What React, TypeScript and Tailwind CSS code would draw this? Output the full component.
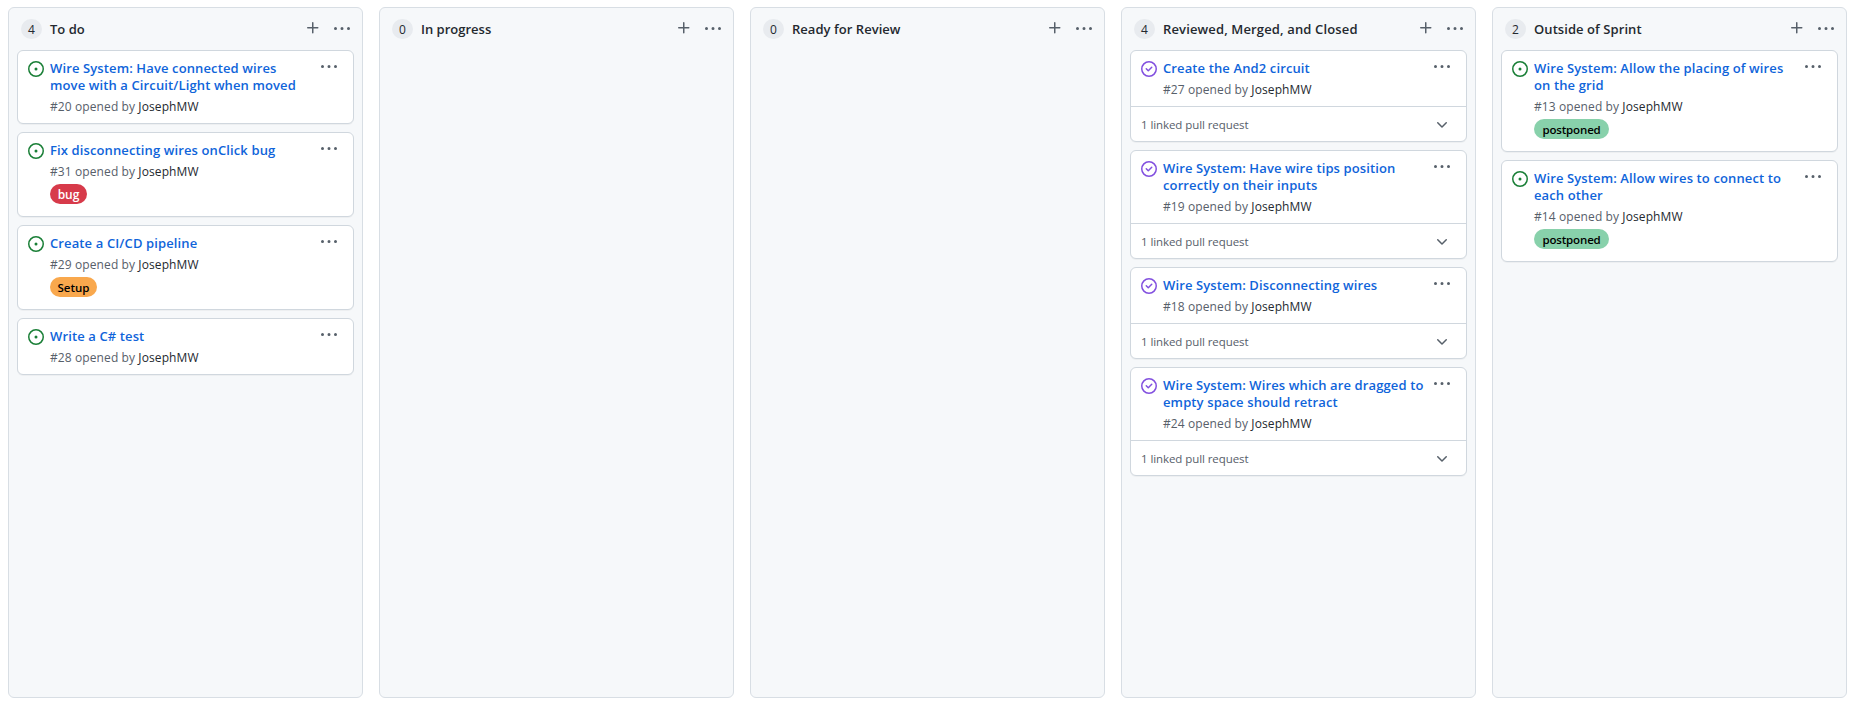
import React from "react";

type Label = { text: string; className: string };
type Issue = {
  lines: string[];
  number: number;
  closed?: boolean;
  label?: Label;
  linked?: boolean;
};
type Column = { title: string; tracking: string; cards: Issue[] };

const postponed: Label = { text: "postponed", className: "w-[75px] bg-[#88d1ab] text-black text-[11.5px] tracking-[-0.15px]" };

const columns: Column[] = [
  {
    title: "To do",
    tracking: "tracking-normal",
    cards: [
      { lines: ["Wire System: Have connected wires", "move with a Circuit/Light when moved"], number: 20 },
      { lines: ["Fix disconnecting wires onClick bug"], number: 31, label: { text: "bug", className: "w-[37px] bg-[#d73a4a] text-white text-[12px]" } },
      { lines: ["Create a CI/CD pipeline"], number: 29, label: { text: "Setup", className: "w-[47px] bg-[#f9a84d] text-black text-[11.5px]" } },
      { lines: ["Write a C# test"], number: 28 },
    ],
  },
  { title: "In progress", tracking: "tracking-normal", cards: [] },
  { title: "Ready for Review", tracking: "tracking-[0.04px]", cards: [] },
  {
    title: "Reviewed, Merged, and Closed",
    tracking: "tracking-[0.14px]",
    cards: [
      { lines: ["Create the And2 circuit"], number: 27, closed: true, linked: true },
      { lines: ["Wire System: Have wire tips position", "correctly on their inputs"], number: 19, closed: true, linked: true },
      { lines: ["Wire System: Disconnecting wires"], number: 18, closed: true, linked: true },
      { lines: ["Wire System: Wires which are dragged to", "empty space should retract"], number: 24, closed: true, linked: true },
    ],
  },
  {
    title: "Outside of Sprint",
    tracking: "tracking-[0.07px]",
    cards: [
      { lines: ["Wire System: Allow the placing of wires", "on the grid"], number: 13, label: postponed },
      { lines: ["Wire System: Allow wires to connect to", "each other"], number: 14, label: postponed },
    ],
  },
];

const paths = {
  open: "M8 9.5a1.5 1.5 0 100-3 1.5 1.5 0 000 3zM8 0a8 8 0 100 16A8 8 0 008 0zM1.5 8a6.5 6.5 0 1113 0 6.5 6.5 0 01-13 0z",
  closed:
    "M11.28 6.78a.75.75 0 00-1.06-1.06L7.25 8.69 5.78 7.22a.75.75 0 00-1.06 1.06l2 2a.75.75 0 001.06 0l3.5-3.5zM16 8A8 8 0 110 8a8 8 0 0116 0zm-1.5 0a6.5 6.5 0 11-13 0 6.5 6.5 0 0113 0z",
  plus: "M7.75 2a.75.75 0 01.75.75V7h4.25a.75.75 0 110 1.5H8.5v4.25a.75.75 0 11-1.5 0V8.5H2.75a.75.75 0 010-1.5H7V2.75A.75.75 0 017.75 2z",
  kebab: "M8 9a1.5 1.5 0 100-3 1.5 1.5 0 000 3zM1.5 9a1.5 1.5 0 100-3 1.5 1.5 0 000 3zm13 0a1.5 1.5 0 100-3 1.5 1.5 0 000 3z",
  chevron: "M12.78 6.22a.75.75 0 010 1.06l-4.25 4.25a.75.75 0 01-1.06 0L3.22 7.28a.75.75 0 011.06-1.06L8 9.94l3.72-3.72a.75.75 0 011.06 0z",
};

function Icon({ name, className }: { name: keyof typeof paths; className: string }) {
  return (
    <svg viewBox="0 0 16 16" width="16" height="16" fillRule="evenodd" fill="currentColor" className={`shrink-0 ${className}`}>
      <path d={paths[name]} />
    </svg>
  );
}

function Card({ issue }: { issue: Issue }) {
  return (
    <article className="rounded-md border border-[#d0d7de] bg-white shadow-[0_1px_0_rgba(27,31,36,0.04)]">
      <div className={`flex items-start pl-2.5 pr-4 ${issue.label ? "pb-[13px]" : "pb-1.5"}`}>
        <Icon name={issue.closed ? "closed" : "open"} className={`mt-2.5 mr-1.5 ${issue.closed ? "text-[#8250df]" : "text-[#1a7f37]"}`} />
        <div className="min-w-0 flex-1 pt-[9px]">
          <h3 className="text-[13px] leading-[17px] font-semibold tracking-[0.12px] whitespace-nowrap text-[#0f64da]">
            {issue.lines.map((line) => (
              <span key={line} className="block">{line}</span>
            ))}
          </h3>
          <p className="mt-[3px] h-5 text-[12px] leading-5 tracking-[0.1px] whitespace-nowrap text-[#57606a]">
            #{issue.number} opened by <span className="text-[#24292f]">JosephMW</span>
          </p>
          {issue.label && (
            <span className={`mt-0.5 -mb-[1px] flex h-5 items-center justify-center rounded-full pt-px font-semibold ${issue.label.className}`}>
              {issue.label.text}
            </span>
          )}
        </div>
        <Icon name="kebab" className="mt-2 text-[#57606a]" />
      </div>
      {issue.linked && (
        <div className="flex h-[35px] items-center justify-between border-t border-[#d0d7de] pl-2.5 pr-4 text-[#57606a]">
          <span className="pt-px text-[11.5px] leading-5 tracking-[-0.08px]">1 linked pull request</span>
          <Icon name="chevron" className="" />
        </div>
      )}
    </article>
  );
}

export default function App() {
  return (
    <main className="flex h-[706px] gap-4 overflow-hidden bg-white px-2 pt-[7px] pb-2 font-['Open_Sans','Noto_Sans',sans-serif]">
      {columns.map((column) => (
        <section key={column.title} className="w-[355px] shrink-0 rounded-md border border-[#d8dee4] bg-[#f6f8fa]">
          <header className="flex h-[42px] items-start pl-3 pr-3">
            <span className="mt-[11px] flex h-5 w-[21px] items-center justify-center rounded-full bg-[#e8ebef] pt-px text-[12px] font-medium text-[#24292f]">
              {column.cards.length}
            </span>
            <h2 className={`mt-[11px] ml-2 flex-1 text-[13px] leading-5 font-semibold whitespace-nowrap text-[#24292f] ${column.tracking}`}>{column.title}</h2>
            <Icon name="plus" className="mt-3 mr-[13px] text-[#57606a]" />
            <Icon name="kebab" className="mt-[13px] text-[#57606a]" />
          </header>
          <div className="flex flex-col gap-2 px-2">
            {column.cards.map((issue) => (
              <Card key={issue.number} issue={issue} />
            ))}
          </div>
        </section>
      ))}
    </main>
  );
}
